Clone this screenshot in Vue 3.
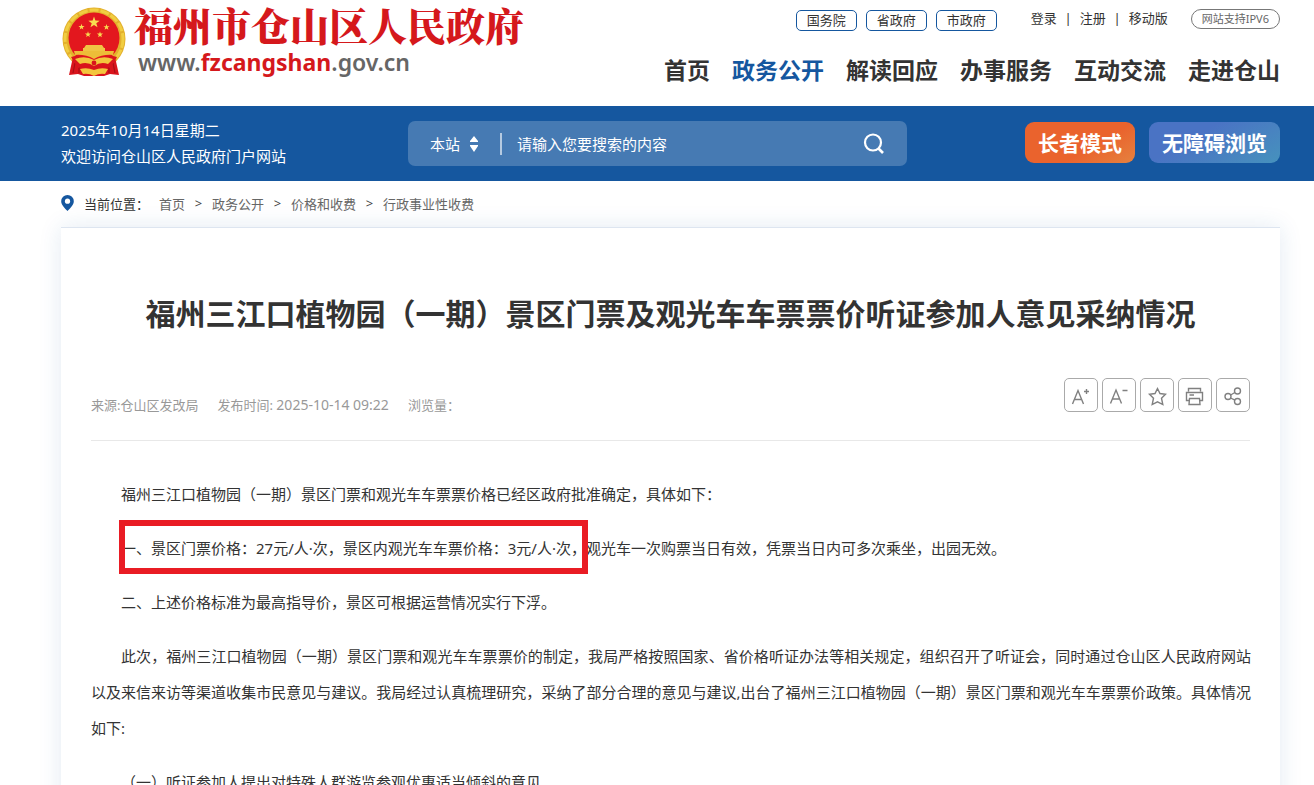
<template>
  <div class="page" lang="zh-CN">
    <header class="header wrap">
      <a class="logo" href="#">
        <svg class="emblem" viewBox="0 0 66 70" aria-hidden="true">
          <circle cx="33" cy="32" r="31.5" fill="#e3b02c" />
          <circle cx="33" cy="32" r="29" fill="none" stroke="#f1cd42" stroke-width="3" stroke-dasharray="9 2" />
          <path d="M12 50 L8 68 L17 67 L23 69 H43 L49 67 L58 68 L54 50 Z" fill="#d9141c" />
          <path d="M14 56 L12 66 M52 56 L54 66 M18 58 L18 66 M48 58 L48 66" stroke="#a80e16" stroke-width="1.2" />
          <circle cx="33" cy="31" r="25.5" fill="#e3171e" />
          <polygon :points="star(33, 15.5, 6)" fill="#f8dc50" />
          <polygon v-for="s in smallStars" :key="s.x" :points="star(s.x, s.y, 3.2)" fill="#f8dc50" />
          <path d="M25 38 h16 l2 3 h-20 z M22 41 h22 v5 h-22 z" fill="#f0c444" />
          <path d="M13 44 H53 L52 48 Q42 47 33 52 Q24 47 14 48 Z" fill="#edbd38" />
          <path d="M10 50 Q22 46 33 54 Q44 46 56 50 L49 61 Q41 57 33 61 Q25 57 17 61 Z" fill="#d9141c" />
          <path d="M14 52 Q24 48 33 53 Q42 48 52 52 L47 57 Q40 54 33 59 Q26 54 19 57 Z" fill="#f3c63d" />
          <circle cx="33" cy="56" r="2.4" fill="#d9141c" />
          <path d="M19 62 Q26 60 33 63 Q40 60 47 62 L44 67 Q38 66 33 69 Q28 66 22 67 Z" fill="#f3c63d" />
        </svg>
        <span class="logo-text">
          <span class="logo-name">福州市仓山区人民政府</span>
          <span class="logo-url">www.<b>fzcangshan</b>.gov.cn</span>
        </span>
      </a>

      <div class="header-right">
        <div class="top-links">
          <a v-for="gov in govLinks" :key="gov" class="gov-link" href="#">{{ gov }}</a>
          <div class="user-links">
            <template v-for="(item, i) in userLinks" :key="item">
              <span v-if="i > 0" class="bar">|</span>
              <a href="#">{{ item }}</a>
            </template>
          </div>
          <span class="ipv6">网站支持IPV6</span>
        </div>
        <nav class="nav">
          <a v-for="item in navItems" :key="item" href="#" :class="{ active: item === activeNav }">{{ item }}</a>
        </nav>
      </div>
    </header>

    <div class="banner">
      <div class="banner-inner wrap">
        <div class="welcome">
          <p>2025年10月14日星期二</p>
          <p>欢迎访问仓山区人民政府门户网站</p>
        </div>
        <form class="search" @submit.prevent>
          <select v-model="scope" class="scope" aria-label="搜索范围">
            <option value="site">本站</option>
          </select>
          <svg class="scope-arrows" viewBox="0 0 8 16" aria-hidden="true">
            <path d="M4 0 L8 5 V6 H0 V5 Z M0 9 H8 V10 L4 16 L0 10 Z" fill="#fff" />
          </svg>
          <span class="split"></span>
          <input v-model="keyword" type="text" placeholder="请输入您要搜索的内容" aria-label="搜索内容" />
          <button type="submit" class="search-btn" aria-label="搜索">
            <svg viewBox="0 0 22 22">
              <circle cx="10" cy="9.5" r="8" fill="none" stroke="#fff" stroke-width="2.2" />
              <path d="M15.5 15.5 L20 20" stroke="#fff" stroke-width="2.6" />
            </svg>
          </button>
        </form>
        <div class="modes">
          <button type="button" class="mode elder">长者模式</button>
          <button type="button" class="mode barrier">无障碍浏览</button>
        </div>
      </div>
    </div>

    <nav class="crumbs wrap" aria-label="当前位置">
      <svg class="pin" viewBox="0 0 13 16" aria-hidden="true">
        <path d="M6.5 0 A6.3 6.3 0 0 1 12.8 6.3 C12.8 10 9 13.5 6.5 16 C4 13.5 .2 10 .2 6.3 A6.3 6.3 0 0 1 6.5 0 Z" fill="#15579f" />
        <circle cx="6.5" cy="6.2" r="2.6" fill="#fff" />
      </svg>
      <span class="crumb-label">当前位置：</span>
      <template v-for="(item, i) in crumbs" :key="item">
        <span v-if="i > 0" class="arrow">&gt;</span>
        <a href="#">{{ item }}</a>
      </template>
    </nav>

    <main class="wrap">
      <article class="card">
        <h1>福州三江口植物园（一期）景区门票及观光车车票票价听证参加人意见采纳情况</h1>

        <div class="meta">
          <div class="meta-text">
            <span>来源:仓山区发改局</span>
            <span>发布时间: <time datetime="2025-10-14T09:22">2025-10-14 09:22</time></span>
            <span>浏览量：</span>
          </div>
          <div class="tools">
            <button type="button" aria-label="放大字体">
              <svg viewBox="1 1 32 32">
                <path d="M8.5 26 L14 12.5 L19.5 26 M10.5 21.5 H17.5 M20 13.5 H25 M22.5 11 V16" />
              </svg>
            </button>
            <button type="button" aria-label="缩小字体">
              <svg viewBox="1 1 32 32">
                <path d="M8.5 25.5 L14 12 L19.5 25.5 M10.5 21 H17.5 M20.5 12.5 H25.5" />
              </svg>
            </button>
            <button type="button" aria-label="收藏">
              <svg viewBox="1 1 32 32">
                <path d="M17.5 10.5 L20 15.5 L25.5 16.3 L21.5 20.2 L22.8 26.5 L17.5 23.8 L12.2 26.5 L13.5 20.2 L9.5 16.3 L15 15.5 Z" />
              </svg>
            </button>
            <button type="button" aria-label="打印">
              <svg viewBox="1 1 32 32">
                <path d="M10.5 13.5 V10.5 H22.5 V13.5 M11 22.5 H8.5 V14.5 H24.5 V22.5 H22 M11.5 17 H16 M11.5 20.5 H21.5 L22 26.5 H11 Z" />
              </svg>
            </button>
            <button type="button" aria-label="分享">
              <svg viewBox="1 1 32 32">
                <circle cx="12" cy="18.5" r="3" />
                <circle cx="21.5" cy="13" r="3" />
                <circle cx="21.5" cy="23.5" r="3" />
                <path d="M14.6 17 L18.9 14.5 M14.6 20 L18.9 22.2" />
              </svg>
            </button>
          </div>
        </div>

        <div class="content">
          <p>福州三江口植物园（一期）景区门票和观光车车票票价格已经区政府批准确定，具体如下：</p>
          <p>
            <span class="marked">一、景区门票价格：27元/人·次，景区内观光车车票价格：3元/人·次，</span>观光车一次购票当日有效，凭票当日内可多次乘坐，出园无效。
          </p>
          <p>二、上述价格标准为最高指导价，景区可根据运营情况实行下浮。</p>
          <p>此次，福州三江口植物园（一期）景区门票和观光车车票票价的制定，我局严格按照国家、省价格听证办法等相关规定，组织召开了听证会，同时通过仓山区人民政府网站以及来信来访等渠道收集市民意见与建议。我局经过认真梳理研究，采纳了部分合理的意见与建议,出台了福州三江口植物园（一期）景区门票和观光车车票票价政策。具体情况如下:</p>
          <p>（一）听证参加人提出对特殊人群游览参观优惠适当倾斜的意见</p>
        </div>
      </article>
    </main>
  </div>
</template>

<script setup>
import { ref } from 'vue'

const scope = ref('site')
const keyword = ref('')
const activeNav = ref('政务公开')

const govLinks = ['国务院', '省政府', '市政府']
const userLinks = ['登录', '注册', '移动版']
const navItems = ['首页', '政务公开', '解读回应', '办事服务', '互动交流', '走进仓山']
const crumbs = ['首页', '政务公开', '价格和收费', '行政事业性收费']

const smallStars = [
  { x: 20.5, y: 20 },
  { x: 45.5, y: 20.2 },
  { x: 27, y: 27.5 },
  { x: 39, y: 27.6 },
]

// 五角星顶点
const star = (cx, cy, r) => {
  const points = []
  for (let i = 0; i < 10; i++) {
    const radius = i % 2 === 0 ? r : r * 0.4
    const angle = (Math.PI / 5) * i - Math.PI / 2
    points.push(`${cx + radius * Math.cos(angle)},${cy + radius * Math.sin(angle)}`)
  }
  return points.join(' ')
}
</script>

<style>
body {
  margin: 0;
  background: #fff;
}
</style>

<style scoped>
.page {
  height: 100vh;
  overflow: hidden;
  color: #333;
  font-family: 'Noto Sans', 'Noto Sans CJK SC', sans-serif;
  font-size: 13px;
}

.page * {
  box-sizing: border-box;
}

p,
h1 {
  margin: 0;
}

a {
  color: inherit;
  text-decoration: none;
}

button,
input,
select {
  margin: 0;
  padding: 0;
  border: 0;
  background: none;
  color: inherit;
  font: inherit;
  outline: none;
}

button {
  cursor: pointer;
}

.wrap {
  padding-left: 61px;
  padding-right: 34px;
}

/* 头部 */
.header {
  display: flex;
  justify-content: space-between;
  height: 106px;
}

.logo {
  display: flex;
  gap: 7px;
  padding-top: 7px;
}

.emblem {
  width: 66px;
  height: 70px;
}

.logo-text {
  display: flex;
  flex-direction: column;
}

.logo-name {
  color: #d5181c;
  font-family: 'Noto Serif CJK SC', 'Noto Sans CJK SC', serif;
  font-size: 39px;
  font-weight: 900;
  line-height: 35px;
  white-space: nowrap;
}

.logo-url {
  padding-left: 4px;
  color: #666;
  font-size: 23px;
  font-weight: 600;
  line-height: 40px;
}

.logo-url b {
  color: #d5181c;
  font-weight: 700;
}

.header-right {
  display: flex;
  flex-direction: column;
  align-items: flex-end;
  padding-top: 9px;
}

.top-links {
  display: flex;
  align-items: center;
  gap: 9px;
  white-space: nowrap;
}

.gov-link {
  padding: 0 10px;
  border: 1px solid #15579f;
  border-radius: 5px;
  line-height: 19px;
}

.user-links {
  display: flex;
  margin: 0 14px 4px 25px;
  line-height: 17px;
}

.bar {
  width: 23px;
  text-align: center;
}

.ipv6 {
  margin-bottom: 2px;
  padding: 0 10px;
  border: 1px solid #777;
  border-radius: 10px;
  color: #666;
  font-size: 11px;
  line-height: 18px;
}

.nav {
  display: flex;
  gap: 22px;
  margin-top: 22px;
  font-size: 23px;
  font-weight: 700;
  line-height: 34px;
  white-space: nowrap;
}

.nav .active {
  color: #15579f;
}

/* 蓝色横幅 */
.banner {
  background: #15579f;
  color: #fff;
}

.banner-inner {
  display: flex;
  align-items: center;
  height: 75px;
}

.welcome {
  flex: 0 0 347px;
  padding-bottom: 2px;
  font-size: 15px;
  line-height: 26px;
}

.search {
  display: flex;
  align-items: center;
  flex: 0 1 499px;
  height: 45px;
  padding: 0 22px;
  border-radius: 7px;
  background: #467ab3;
  font-size: 15px;
}

.scope {
  width: 32px;
  appearance: none;
}

.scope-arrows {
  width: 8px;
  height: 16px;
  margin-left: 8px;
}

.split {
  width: 2px;
  height: 22px;
  margin: 0 15px 0 22px;
  background: #b5cae1;
}

.search input {
  flex: 1;
  min-width: 0;
  height: 30px;
}

.search input::placeholder {
  color: #fff;
  opacity: 1;
}

.search-btn,
.search-btn svg {
  display: block;
  width: 22px;
  height: 22px;
}

.modes {
  display: flex;
  gap: 14px;
  margin-left: auto;
  padding-bottom: 2px;
}

.mode {
  height: 41px;
  padding: 0 13px 2px;
  border-radius: 9px;
  font-size: 21px;
  font-weight: 700;
  white-space: nowrap;
}

.elder {
  background: linear-gradient(150deg, #ea632d 60%, #e5823f);
}

.barrier {
  background: linear-gradient(150deg, #4a73c4 35%, #4692bd);
}

/* 面包屑 */
.crumbs {
  display: flex;
  align-items: center;
  height: 46px;
  padding-bottom: 2px;
  color: #666;
}

.pin {
  width: 13px;
  height: 16px;
  margin-right: 10px;
}

.crumb-label {
  margin-right: 10px;
  color: #333;
}

.arrow {
  width: 27px;
  text-align: center;
  color: #444;
}

/* 正文 */
.card {
  padding: 64px 30px 30px;
  border-top: 1px solid #dde5f0;
  box-shadow: 0 0 22px rgba(21, 87, 159, 0.12);
  background: #fff;
}

h1 {
  font-size: 30px;
  font-weight: 700;
  line-height: 44px;
  text-align: center;
}

.meta {
  display: flex;
  justify-content: space-between;
  margin-top: 42px;
  padding-bottom: 8px;
  border-bottom: 1px solid #e8e8e8;
  color: #999;
}

.meta-text {
  display: flex;
  gap: 19px;
  line-height: 54px;
}

.meta-text time {
  font-size: 14px;
}

.tools {
  display: flex;
  gap: 4px;
}

.tools button {
  width: 34px;
  height: 34px;
  border: 1px solid #aaa;
  border-radius: 5px;
}

.tools svg {
  display: block;
  width: 32px;
  height: 32px;
  fill: none;
  stroke: #808080;
  stroke-width: 1.4;
}

.content {
  margin: 35px -1px 0 0;
  font-size: 15px;
  line-height: 36px;
  text-align: justify;
}

.content p {
  margin-bottom: 18px;
  text-indent: 30px;
}

.marked {
  position: relative;
}

.marked::after {
  content: '';
  position: absolute;
  inset: -18px -2px -16px;
  border: 6px solid #e91c24;
}
</style>
